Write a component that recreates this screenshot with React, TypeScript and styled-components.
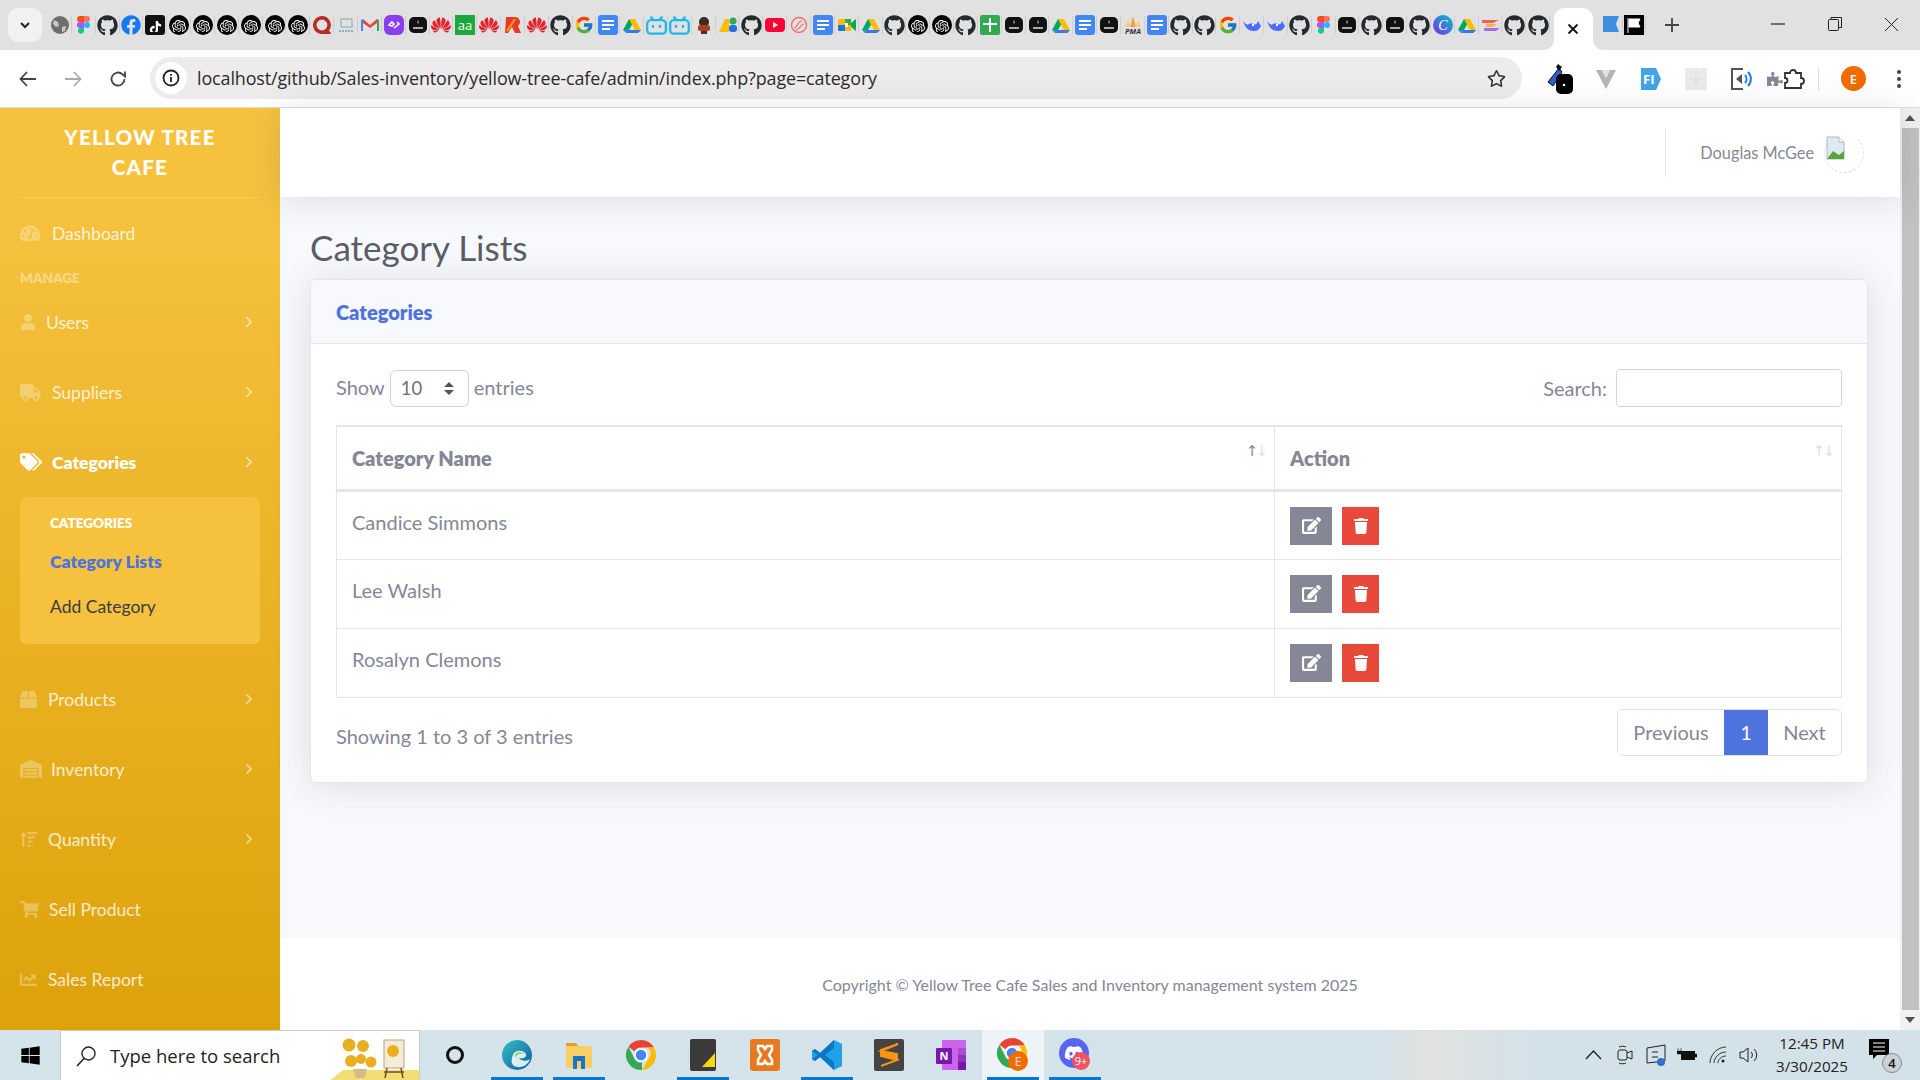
import React from "react";
import styled, { createGlobalStyle } from "styled-components";
import {
  FaTachometerAlt, FaUser, FaTruck, FaTags, FaBox, FaWarehouse, FaSortAmountUp,
  FaShoppingCart, FaChartLine, FaChevronRight, FaEdit, FaTrash, FaGithub, FaFacebook,
  FaWindows, FaDiscord, FaStar, FaRegStar, FaPuzzlePiece,
} from "react-icons/fa";
import { FcGoogle } from "react-icons/fc";
import { SiOpenai, SiHuawei, SiBilibili, SiTiktok, SiQuora } from "react-icons/si";

const GlobalStyle = createGlobalStyle`
  html, body { margin: 0; padding: 0; width: 1920px; height: 1080px; overflow: hidden; background: #fff; }
  * { box-sizing: border-box; }
  body { font-family: "Lato", "Open Sans", sans-serif; color: #858796; }
`;

const Screen = styled.div`width:1920px;height:1080px;display:flex;flex-direction:column;overflow:hidden;`;

/* ---------- browser chrome ---------- */
const TabStrip = styled.div`height:50px;background:#e1e1e1;display:flex;align-items:flex-start;position:relative;flex:none;`;
const TabSearch = styled.div`width:34px;height:34px;margin:8px 6px 0 8px;border-radius:10px;background:#f1f1f1;display:flex;align-items:center;justify-content:center;flex:none;`;
const FavCell = styled.div`width:23.85px;height:34px;margin-top:8px;flex:none;display:flex;align-items:center;justify-content:center;position:relative;
  &::after{content:"";position:absolute;right:0;top:8px;height:18px;width:1px;background:#cfcfcf;}`;
const ActiveTab = styled.div`width:39px;height:42px;margin:8px 3px 0 3.5px;background:#fff;border-radius:10px 10px 0 0;flex:none;display:flex;align-items:center;justify-content:center;position:relative;
  font-family:"DejaVu Sans",sans-serif;color:#111;
  &::before,&::after{content:"";position:absolute;bottom:0;width:10px;height:10px;}
  &::before{left:-10px;background:radial-gradient(circle at 0 0,transparent 9.5px,#fff 10px);}
  &::after{right:-10px;background:radial-gradient(circle at 100% 0,transparent 9.5px,#fff 10px);}`;
const TrailCell = styled(FavCell)`margin-left:${(p: { $ml?: number }) => p.$ml ?? 0}px;`;
const NewTab = styled.div`margin:8px 0 0 14px;height:34px;width:24px;display:flex;align-items:center;justify-content:center;flex:none;`;
const WinControls = styled.div`margin-left:auto;display:flex;height:50px;flex:none;`;
const WinButton = styled.div`width:57px;height:48px;display:flex;align-items:center;justify-content:center;`;

const Toolbar = styled.div`height:58px;background:#fff;border-radius:10px 10px 0 0;margin-top:0;border-bottom:1px solid #dedede;display:flex;align-items:center;flex:none;`;
const NavBtn = styled.div`width:45px;height:40px;display:flex;align-items:center;justify-content:center;flex:none;`;
const NavGroup = styled.div`display:flex;padding-left:5px;width:150px;flex:none;`;
const Omnibox = styled.div`width:1372px;height:42px;margin-top:-1px;border-radius:21px;background:#edebec;display:flex;align-items:center;padding:0 16px 0 5px;flex:none;`;
const InfoChip = styled.div`width:32px;height:32px;border-radius:50%;background:#fff;display:flex;align-items:center;justify-content:center;flex:none;`;
const UrlText = styled.div`margin-left:10px;font-family:"Open Sans",sans-serif;font-size:17.9px;letter-spacing:-0.1px;color:#2b2b2b;flex:1;white-space:nowrap;`;
const ExtGroup = styled.div`display:flex;align-items:center;margin-left:16px;flex:1;height:100%;`;
const ExtBtn = styled.div`width:45px;height:40px;display:flex;align-items:center;justify-content:center;flex:none;position:relative;`;
const ExtSep = styled.div`width:1px;height:24px;background:#ddd;margin:0 12px 0 10px;flex:none;`;
const Avatar = styled.div`width:25px;height:25px;border-radius:50%;background:#f06c00;color:#fff;font:600 13px "Open Sans",sans-serif;display:flex;align-items:center;justify-content:center;flex:none;`;

/* ---------- page ---------- */
const Viewport = styled.div`height:922px;display:flex;flex:none;`;
const Sidebar = styled.nav`width:280px;flex:none;background:linear-gradient(180deg,#f6c23e 10%,#dda20a 100%);display:flex;flex-direction:column;padding:0 20px;`;
const Brand = styled.div`height:90px;flex:none;border-bottom:1px solid rgba(255,255,255,.2);display:flex;align-items:center;justify-content:center;text-align:center;
  color:#fff;font-weight:900;font-size:20.5px;line-height:30px;letter-spacing:1.25px;padding:0 30px 2px;`;
const NavItem = styled.div<{ $active?: boolean; $gap: number }>`height:70px;flex:none;display:flex;align-items:center;font-size:17.5px;
  color:${(p) => (p.$active ? "#fff" : "rgba(255,255,255,.8)")};font-weight:${(p) => (p.$active ? 800 : 400)};
  svg.lead{color:${(p) => (p.$active ? "#fff" : "rgba(255,255,255,.3)")};margin-right:${(p) => p.$gap}px;flex:none;}`;
const Chevron = styled(FaChevronRight)`margin-left:auto;margin-right:5px;color:rgba(255,255,255,.5);font-size:12px;`;
const NavHeading = styled.div`height:19px;flex:none;display:flex;align-items:center;font-size:13.5px;font-weight:800;color:rgba(255,255,255,.4);text-transform:uppercase;`;
const SubMenu = styled.div`height:147px;flex:none;margin-bottom:20px;background:#f6c23e;border-radius:6px;padding:10px 10px 0 30px;display:flex;flex-direction:column;`;
const SubHeading = styled.div`height:32px;flex:none;display:flex;align-items:center;font-size:13.5px;font-weight:800;color:#fff;text-transform:uppercase;`;
const SubLink = styled.div<{ $active?: boolean }>`height:45px;flex:none;display:flex;align-items:center;font-size:17.5px;
  color:${(p) => (p.$active ? "#4e73df" : "#3a3b45")};font-weight:${(p) => (p.$active ? 800 : 400)};`;

const Main = styled.div`flex:1;display:flex;flex-direction:column;background:#f8f9fc;min-width:0;`;
const Topbar = styled.header`height:89px;flex:none;background:#fff;box-shadow:0 3px 35px 0 rgba(58,59,69,.15);display:flex;align-items:center;justify-content:flex-end;padding-right:36px;position:relative;`;
const TopDivider = styled.div`width:1px;height:48px;background:#e3e6f0;margin-right:34px;`;
const UserName = styled.span`font-size:16.3px;color:#858796;margin-right:10px;`;
const UserPic = styled.div`width:40px;height:40px;border-radius:50%;border:1px dashed #e2e2e6;border-top-color:transparent;border-bottom-color:#ddd;position:relative;`;
const Content = styled.main`flex:1;padding:29px 32px 0 30px;`;
const PageTitle = styled.h1`margin:0 0 11px;font-size:35px;line-height:42px;font-weight:400;color:#5a5c69;`;
const Card = styled.section`background:#fff;border:1px solid #e3e6f0;border-radius:6px;box-shadow:0 3px 35px 0 rgba(58,59,69,.15);overflow:hidden;`;
const CardHeader = styled.div`height:64px;background:#f8f9fc;border-bottom:1px solid #e3e6f0;display:flex;align-items:center;padding:0 25px;font-size:20px;font-weight:800;color:#4e73df;`;
const CardBody = styled.div`padding:25px 25px 26px;`;
const FilterRow = styled.div`height:38px;margin-bottom:18px;display:flex;align-items:center;justify-content:space-between;font-size:20px;`;
const ShowGroup = styled.div`display:flex;align-items:center;gap:5px;margin-top:-2px;`;
const SelectBox = styled.div`position:relative;width:79px;height:37px;margin-top:2px;svg{position:absolute;right:15px;top:12px;pointer-events:none;}`;
const EntrySelect = styled.select`width:100%;height:100%;appearance:none;border:1px solid #d1d3e2;border-radius:6px;background:#fff;padding:0 10px;font:18.5px "Lato",sans-serif;color:#6e707e;`;
const SearchGroup = styled.label`display:flex;align-items:center;gap:9px;`;
const SearchInput = styled.input`width:226px;height:38px;border:1px solid #d1d3e2;border-radius:4px;background:#fff;`;
const Table = styled.table`width:100%;table-layout:fixed;border-collapse:collapse;font-size:20px;border:1px solid #e3e6f0;`;
const Th = styled.th`height:64px;border:1px solid #e3e6f0;border-bottom:3px solid #e3e6f0;border-top-width:2px;text-align:left;padding:0 15px;font-weight:800;color:#858796;position:relative;`;
const SortArrows = styled.span`position:absolute;right:9px;top:14px;font:15px/20px "DejaVu Sans",sans-serif;letter-spacing:-3px;`;
const Arrow = styled.span<{ $on?: boolean }>`color:${(p) => (p.$on ? "#858796" : "#dfe1e8")};`;
const Td = styled.td`height:69px;border:1px solid #e3e6f0;padding:15px 15px 0;vertical-align:top;line-height:30px;color:#858796;`;
const Actions = styled.div`display:flex;gap:10px;`;
const ActionBtn = styled.button<{ $w: number; $bg: string }>`width:${(p) => p.$w}px;height:38px;border:none;padding:0;background:${(p) => p.$bg};color:#fff;display:flex;align-items:center;justify-content:center;font-size:19px;`;
const TableFooter = styled.div`display:flex;align-items:flex-start;justify-content:space-between;margin-top:11px;font-size:20px;`;
const Info = styled.div`margin-top:12px;line-height:30px;`;
const Pager = styled.div`display:flex;height:47px;border:1px solid #dddfeb;border-radius:6px;overflow:hidden;width:225px;`;
const PageBtn = styled.div<{ $w: number; $on?: boolean }>`width:${(p) => p.$w}px;display:flex;align-items:center;justify-content:center;
  background:${(p) => (p.$on ? "#4e73df" : "#fff")};color:${(p) => (p.$on ? "#fff" : "#858796")};`;
const Footer = styled.footer`height:92px;flex:none;background:#fff;display:flex;align-items:center;justify-content:center;font-size:16px;color:#858796;padding-top:1px;`;
const Scrollbar = styled.div`width:20px;flex:none;background:#f1f1f1;display:flex;flex-direction:column;align-items:center;`;
const ScrollArrow = styled.div`height:20px;width:20px;display:flex;align-items:center;justify-content:center;flex:none;`;
const ScrollThumb = styled.div`flex:1;width:17px;background:#c1c1c1;margin-left:1px;`;

/* ---------- taskbar ---------- */
const Taskbar = styled.footer`height:50px;flex:none;display:flex;align-items:center;position:relative;
  background:linear-gradient(90deg,#d5e3ea 0%,#d4e2e9 72%,#dfe2e0 74%,#dde2e2 76%,#d3e1e8 80%,#d3e1e8 100%);`;
const StartBtn = styled.div`width:60px;height:50px;display:flex;align-items:center;justify-content:center;flex:none;color:#000;`;
const SearchBox = styled.div`width:360px;height:50px;background:#fff;border:1px solid #ccc;border-bottom:none;display:flex;align-items:center;padding-left:14px;flex:none;position:relative;overflow:hidden;
  font:18.5px "Open Sans",sans-serif;color:#222;svg.glass{margin-right:13px;}`;
const SearchArt = styled.svg`position:absolute;right:0;top:0;`;
const TaskApps = styled.div`display:flex;height:50px;flex:none;margin-left:4px;`;
const TaskApp = styled.div<{ $on?: boolean; $bright?: boolean }>`width:62px;height:50px;display:flex;align-items:center;justify-content:center;position:relative;flex:none;
  background:${(p) => (p.$bright ? "#edf3f6" : "transparent")};
  ${(p) => (p.$on ? "&::after{content:'';position:absolute;left:5px;right:5px;bottom:0;height:3px;background:#0078d4;}" : "")}`;
const Tray = styled.div`margin-left:auto;display:flex;align-items:center;height:50px;flex:none;padding-right:18px;`;
const TrayIcon = styled.div`width:31px;height:50px;display:flex;align-items:center;justify-content:center;flex:none;`;
const Clock = styled.div`width:80px;margin:0 16px 0 8px;text-align:center;font:15.2px/23px "Open Sans",sans-serif;color:#222;flex:none;`;
const Notify = styled.div`width:34px;height:40px;position:relative;flex:none;`;
const NotifyBadge = styled.div`position:absolute;left:14px;top:18px;width:20px;height:20px;border-radius:50%;background:#c9d2d7;border:1px solid #888;color:#111;font:600 13px/18px "Open Sans",sans-serif;text-align:center;`;

/* ---------- favicons ---------- */
const TPS = () => (
  <svg width="20" height="20" viewBox="0 0 20 20"><rect x="1" y="2" width="18" height="16" rx="5" fill="#111" /><path d="M10 5c1 1 1.5 2 0 4c-1-1-1-2 0-4z" fill="#999" /><rect x="5" y="12" width="10" height="2" fill="#aaa" /></svg>
);
const Gpt = () => (
  <svg width="20" height="20" viewBox="0 0 20 20"><circle cx="10" cy="10" r="10" fill="#000" /><foreignObject x="3" y="3" width="14" height="14"><SiOpenai size={14} color="#fff" /></foreignObject></svg>
);
const Docs = () => (
  <svg width="20" height="20" viewBox="0 0 20 20"><rect width="20" height="20" y="0" rx="3" fill="#4285f4" /><path d="M4 5h12v2H4zM4 9h12v2H4zM4 13h8v2H4z" fill="#fff" /></svg>
);
const Drive = () => (
  <svg width="20" height="20" viewBox="0 0 20 20"><path d="M7 2h6l-6 11H1z" fill="#00a85d" transform="translate(0 2)" /><path d="M7 2h6l6 11h-6z" fill="#fbbc04" transform="translate(0 2)" /><path d="M1 15h18l-3 3H4z" fill="#4285f4" /><path d="M7 15h12l-3 3H4z" fill="#3b78e7" /></svg>
);
const Figma = () => (
  <svg width="20" height="20" viewBox="0 0 20 20"><path d="M6 1h4v6H6a3 3 0 0 1 0-6z" fill="#f24e1e" /><path d="M10 1h3a3 3 0 0 1 0 6h-3z" fill="#ff7262" /><path d="M6 7h4v6H6a3 3 0 0 1 0-6z" fill="#a259ff" /><circle cx="13" cy="10" r="3" fill="#1abcfe" /><path d="M6 13h4v3a3 3 0 1 1-4-3z" fill="#0acf83" /></svg>
);
const Gh = () => <FaGithub size={21} color="#24292e" />;
const Hw = () => <SiHuawei size={20} color="#e0242f" />;
const Bili = () => <SiBilibili size={21} color="#20b8ef" />;
const Deep = () => (
  <svg width="20" height="20" viewBox="0 0 20 20"><path d="M1 6c2 7 6 10 11 10c3 0 6-2 7-5l-3-5c-1 3-2 4-4 3C9 8 6 9 6 10C4 9 2 8 1 6z" fill="#4d6bfe" /><circle cx="11" cy="10" r="1.2" fill="#fff" /></svg>
);
const G = () => <FcGoogle size={20} />;

const favs: React.ReactNode[] = [
  <svg key="a" width="20" height="20" viewBox="0 0 20 20"><circle cx="10" cy="10" r="9" fill="#6e6e6e" /><path d="M4 5l4 2l1 4l-3 1l-3-3zM12 12l4-1l-1 5l-3 1z" fill="#c9c9c9" /></svg>,
  <Figma />, <Gh />, <FaFacebook size={20} color="#1877f2" />,
  <svg width="20" height="20" viewBox="0 0 20 20"><rect width="20" height="20" rx="3" fill="#111" /><foreignObject x="4" y="3" width="13" height="14"><SiTiktok size={13} color="#fff" /></foreignObject></svg>,
  <Gpt />, <Gpt />, <Gpt />, <Gpt />, <Gpt />, <Gpt />,
  <SiQuora size={18} color="#b92b27" />,
  <svg width="20" height="20" viewBox="0 0 20 20"><rect x="5" y="4" width="11" height="8" fill="none" stroke="#8aa" /><path d="M3 16h14" stroke="#8ac" strokeDasharray="2 1" strokeWidth="2" /></svg>,
  <svg width="20" height="20" viewBox="0 0 20 20"><path d="M1 5l2-1v12H1z" fill="#4285f4" /><path d="M19 5l-2-1v12h2z" fill="#34a853" /><path d="M3 4l7 6l7-6v4l-7 5l-7-5z" fill="#ea4335" /></svg>,
  <svg width="20" height="20" viewBox="0 0 20 20"><rect width="20" height="20" rx="6" fill="#8b3df0" /><path d="M5 10l3-3l2 2l-2 2zM10 13l5-4l-2-2" stroke="#fff" fill="none" strokeWidth="1.6" /></svg>,
  <TPS />, <Hw />,
  <svg width="20" height="20" viewBox="0 0 20 20"><rect width="20" height="20" fill="#1ea83c" /><text x="10" y="14.5" fontSize="13" fill="#fff" textAnchor="middle" fontFamily="Open Sans">aa</text></svg>,
  <Hw />,
  <svg width="20" height="20" viewBox="0 0 20 20"><path d="M3 2h9a5 5 0 0 1 3 9l3 7h-6l-3-6l-4 6H2z" fill="#e63a2e" /><path d="M4 16L12 4" stroke="#f6a800" strokeWidth="2" /></svg>,
  <Hw />, <Gh />, <G />, <Docs />, <Drive />,
  <Bili />, <Bili />,
  <svg width="20" height="20" viewBox="0 0 20 20"><circle cx="10" cy="7" r="5" fill="#3a2a20" /><rect x="4" y="10" width="12" height="6" rx="2" fill="#a8401e" /><path d="M7 16h6v3H7z" fill="#523" /></svg>,
  <svg width="20" height="20" viewBox="0 0 20 20"><path d="M1 17L7 4h4v13z" fill="#fbbc04" /><circle cx="15" cy="6" r="3.5" fill="#34a853" /><rect x="11" y="10" width="8" height="7" rx="3" fill="#1a73e8" /></svg>,
  <Gh />,
  <svg width="20" height="20" viewBox="0 0 20 20"><rect x="0" y="3" width="20" height="14" rx="4" fill="#ff0033" /><path d="M8 7l5 3l-5 3z" fill="#fff" /></svg>,
  <svg width="20" height="20" viewBox="0 0 20 20"><circle cx="10" cy="10" r="7.5" fill="none" stroke="#f26d6d" strokeWidth="1.4" /><path d="M5 13c4 0 3-7 8-7M7 15c4 0 4-6 8-6" fill="none" stroke="#f26d6d" strokeWidth="1.2" /></svg>,
  <Docs />,
  <svg width="20" height="20" viewBox="0 0 20 20"><rect x="1" y="4" width="13" height="12" rx="1.5" fill="#fbbc04" /><path d="M1 10h7v6H2.5A1.5 1.5 0 0 1 1 14.5z" fill="#1a73e8" /><path d="M8 4h6v6H8z" fill="#34a853" /><path d="M8 8h3v4H8z" fill="#fff" /><path d="M14 8l5-4v12l-5-4z" fill="#00ac47" /></svg>,
  <Drive />, <Gh />, <Gpt />, <Gpt />, <Gh />,
  <svg width="20" height="20" viewBox="0 0 20 20"><rect width="20" height="20" rx="2" fill="#34a853" /><path d="M9 3h2v5h6v2h-6v7H9v-7H3V8h6z" fill="#fff" /></svg>,
  <TPS />, <TPS />, <Drive />, <Docs />, <TPS />,
  <svg width="20" height="20" viewBox="0 0 20 20"><path d="M10 1l3 11H7z" fill="#f0a040" /><path d="M5 5l3 7H2zM15 5l3 7h-6z" fill="#f7c98a" /><text x="10" y="19" fontSize="7.5" fontStyle="italic" fontWeight="700" fill="#334" textAnchor="middle" fontFamily="Open Sans">PMA</text></svg>,
  <Docs />, <Gh />, <Gh />, <G />, <Deep />, <Deep />, <Gh />, <Figma />, <TPS />, <Gh />, <TPS />, <Gh />,
  <svg width="20" height="20" viewBox="0 0 20 20"><defs><linearGradient id="cv" x1="0" y1="1" x2="1" y2="0"><stop offset="0" stopColor="#7d2ae8" /><stop offset="1" stopColor="#00c4cc" /></linearGradient></defs><circle cx="10" cy="10" r="10" fill="url(#cv)" /><text x="10" y="15" fontSize="14" fontStyle="italic" fill="#fff" textAnchor="middle" fontFamily="Liberation Serif">C</text></svg>,
  <Drive />,
  <svg width="20" height="20" viewBox="0 0 20 20"><path d="M1 5h17l-6 3H1z" fill="#ff5a5f" /><path d="M5 9h11l-5 3H5z" fill="#f7b733" /><path d="M3 13h16l-4 3H3z" fill="#a36bf2" /></svg>,
  <Gh />, <Gh />,
];

const ChromeLogo = ({ size = 32 }: { size?: number }) => (
  <svg width={size} height={size} viewBox="0 0 32 32">
    <path d="M16 1a15 15 0 0 1 13 7.5H16a7.5 7.5 0 0 0-6.5 3.8L3.500 7.800A15 15 0 0 1 16 1z" fill="#ea4335" />
    <path d="M29 8.500A15 15 0 0 1 17 31l6.500-11.300A7.500 7.500 0 0 0 22.500 8.500z" fill="#fbbc04" />
    <path d="M3.500 7.800L9.500 19.700A7.500 7.500 0 0 0 17 23.500L17 31A15 15 0 0 1 3.500 7.800z" fill="#34a853" />
    <circle cx="16" cy="16" r="6" fill="#4285f4" stroke="#fff" strokeWidth="1.500" />
  </svg>
);

const navGlyph = { className: "lead" };

export default function App() {
  return (
    <Screen>
      <GlobalStyle />
      <TabStrip>
        <TabSearch>
          <svg width="14" height="14" viewBox="0 0 14 14"><path d="M3 5l4 4l4-4" fill="none" stroke="#222" strokeWidth="2" /></svg>
        </TabSearch>
        {favs.map((f, i) => <FavCell key={i}>{f}</FavCell>)}
        <ActiveTab>
          <svg width="12" height="12" viewBox="0 0 12 12"><path d="M1.500 1.500l9 9M10.500 1.500l-9 9" stroke="#111" strokeWidth="1.800" /></svg>
        </ActiveTab>
        <TrailCell $ml={3}>
          <svg width="18" height="20" viewBox="0 0 18 20"><path d="M1 1h16l-3 8l3 8H1z" fill="#3f8fe0" /></svg>
        </TrailCell>
        <FavCell>
          <svg width="20" height="20" viewBox="0 0 20 20"><rect width="20" height="20" fill="#000" /><path d="M4 3v15M5 4h11l-2 4l2 4H5z" stroke="#fff" fill="#fff" /></svg>
        </FavCell>
        <NewTab>
          <svg width="14" height="14" viewBox="0 0 14 14"><path d="M7 0v14M0 7h14" stroke="#444" strokeWidth="1.800" /></svg>
        </NewTab>
        <WinControls>
          <WinButton><svg width="14" height="14" viewBox="0 0 14 14"><path d="M0 7h14" stroke="#222" strokeWidth="1.200" /></svg></WinButton>
          <WinButton><svg width="14" height="14" viewBox="0 0 14 14"><rect x=".5" y="2.500" width="10" height="11" rx="1" fill="none" stroke="#222" /><path d="M3 2.500V.5h10.500v10h-3" fill="none" stroke="#222" /></svg></WinButton>
          <WinButton><svg width="15" height="15" viewBox="0 0 15 15"><path d="M1 1l13 13M14 1L1 14" stroke="#222" strokeWidth="1" /></svg></WinButton>
        </WinControls>
      </TabStrip>

      <Toolbar>
        <NavGroup>
          <NavBtn><svg width="18" height="18" viewBox="0 0 18 18"><path d="M17 9H2M8 2L1.500 9L8 16" fill="none" stroke="#444" strokeWidth="1.800" /></svg></NavBtn>
          <NavBtn><svg width="18" height="18" viewBox="0 0 18 18"><path d="M1 9h15M10 2l6.500 7l-6.500 7" fill="none" stroke="#aaa" strokeWidth="1.800" /></svg></NavBtn>
          <NavBtn><svg width="18" height="18" viewBox="0 0 18 18"><path d="M15.500 9a6.500 6.500 0 1 1-2-4.700L16 6.500V1.500" fill="none" stroke="#444" strokeWidth="1.800" /></svg></NavBtn>
        </NavGroup>
        <Omnibox>
          <InfoChip>
            <svg width="18" height="18" viewBox="0 0 18 18"><circle cx="9" cy="9" r="7.500" fill="none" stroke="#222" strokeWidth="1.800" /><path d="M9 8v5M9 5v1.800" stroke="#222" strokeWidth="1.800" /></svg>
          </InfoChip>
          <UrlText>localhost/github/Sales-inventory/yellow-tree-cafe/admin/index.php?page=category</UrlText>
          <FaRegStar size={19} color="#333" />
        </Omnibox>
        <ExtGroup>
          <ExtBtn>
            <svg width="28" height="34" viewBox="0 0 28 34"><path d="M1 20l11-14l3 4l-9 14z" fill="#2d5fd0" stroke="#111" /><path d="M11 2l4 3l-3 4l-3-4z" fill="#111" /><rect x="9" y="12" width="17" height="20" rx="5" fill="#000" /><circle cx="17" cy="23" r="1.300" fill="#fff" /></svg>
          </ExtBtn>
          <ExtBtn><svg width="22" height="20" viewBox="0 0 22 20"><path d="M1 1h6l4 8l4-8h6L11 20z" fill="#b4b4b4" /><path d="M7 1h8l-4 8z" fill="#e1e1e1" /></svg></ExtBtn>
          <ExtBtn><svg width="22" height="24" viewBox="0 0 22 24"><path d="M1 1h15l5 11l-5 11H1z" fill="#42a5e8" /><text x="3" y="17" fontSize="13" fontWeight="700" fill="#fff" fontFamily="Open Sans">FI</text></svg></ExtBtn>
          <ExtBtn><svg width="22" height="22" viewBox="0 0 22 22"><rect width="22" height="22" fill="#ececec" /><path d="M2 2l18 18M20 2L2 20M11 2v18M2 11h18" stroke="#ddd" /></svg></ExtBtn>
          <ExtBtn><svg width="22" height="24" viewBox="0 0 22 24"><path d="M13 2H2v20h11" fill="none" stroke="#555" strokeWidth="2" /><path d="M6 12l6-5v10z" fill="#555" /><path d="M15 8a6 6 0 0 1 0 8M18 5a10 10 0 0 1 0 14" fill="none" stroke="#1a7fe0" strokeWidth="2" /></svg></ExtBtn>
          <ExtBtn><FaPuzzlePiece size={0} /><svg width="22" height="22" viewBox="0 0 22 22"><path d="M2 5h5a3 3 0 0 1 6 0h5v5a3 3 0 0 1 0 6v4H2v-5a2.500 2.500 0 0 0 0-5z" fill="none" stroke="#333" strokeWidth="1.800" /></svg></ExtBtn>
          <ExtSep />
          <ExtBtn><Avatar>E</Avatar></ExtBtn>
          <ExtBtn><svg width="6" height="20" viewBox="0 0 6 20"><circle cx="3" cy="3" r="2" fill="#444" /><circle cx="3" cy="10" r="2" fill="#444" /><circle cx="3" cy="17" r="2" fill="#444" /></svg></ExtBtn>
        </ExtGroup>
      </Toolbar>

      <Viewport>
        <Sidebar>
          <Brand>YELLOW TREE CAFE</Brand>
          <NavItem $gap={12}><FaTachometerAlt {...navGlyph} size={20} />Dashboard</NavItem>
          <NavHeading>Manage</NavHeading>
          <NavItem $gap={10}><FaUser {...navGlyph} size={16} />Users<Chevron /></NavItem>
          <NavItem $gap={11}><FaTruck {...navGlyph} size={21} />Suppliers<Chevron /></NavItem>
          <NavItem $active $gap={10}><FaTags {...navGlyph} size={22} />Categories<Chevron /></NavItem>
          <SubMenu>
            <SubHeading>Categories</SubHeading>
            <SubLink $active>Category Lists</SubLink>
            <SubLink>Add Category</SubLink>
          </SubMenu>
          <NavItem $gap={11}><FaBox {...navGlyph} size={17} />Products<Chevron /></NavItem>
          <NavItem $gap={9}><FaWarehouse {...navGlyph} size={22} />Inventory<Chevron /></NavItem>
          <NavItem $gap={11}><FaSortAmountUp {...navGlyph} size={17} />Quantity<Chevron /></NavItem>
          <NavItem $gap={10}><FaShoppingCart {...navGlyph} size={19} />Sell Product</NavItem>
          <NavItem $gap={11}><FaChartLine {...navGlyph} size={17} />Sales Report</NavItem>
        </Sidebar>

        <Main>
          <Topbar>
            <TopDivider />
            <UserName>Douglas McGee</UserName>
            <UserPic>
              <svg width="20" height="24" viewBox="0 0 20 24" style={{ position: "absolute", left: 1, top: 2 }}>
                <path d="M1 1h12l5 5v17H1z" fill="#dfe8f6" stroke="#b5b5b5" />
                <path d="M1 23l6-8l6 4l5-4v8z" fill="#5aa53a" />
                <path d="M13 1v5h5" fill="#fff" stroke="#b5b5b5" />
              </svg>
            </UserPic>
          </Topbar>
          <Content>
            <PageTitle>Category Lists</PageTitle>
            <Card>
              <CardHeader>Categories</CardHeader>
              <CardBody>
                <FilterRow>
                  <ShowGroup>
                    Show
                    <SelectBox>
                      <EntrySelect defaultValue="10"><option>10</option><option>25</option><option>50</option></EntrySelect>
                      <svg width="10" height="13" viewBox="0 0 10 13"><path d="M5 0l5 5H0zM5 13l5-5H0z" fill="#555" /></svg>
                    </SelectBox>
                    entries
                  </ShowGroup>
                  <SearchGroup>Search:<SearchInput /></SearchGroup>
                </FilterRow>
                <Table>
                  <colgroup><col width="938" /><col /></colgroup>
                  <thead>
                    <tr>
                      <Th>Category Name<SortArrows><Arrow $on>↑</Arrow><Arrow>↓</Arrow></SortArrows></Th>
                      <Th>Action<SortArrows><Arrow>↑</Arrow><Arrow>↓</Arrow></SortArrows></Th>
                    </tr>
                  </thead>
                  <tbody>
                    {["Candice Simmons", "Lee Walsh", "Rosalyn Clemons"].map((n) => (
                      <tr key={n}>
                        <Td>{n}</Td>
                        <Td>
                          <Actions>
                            <ActionBtn $w={42} $bg="#858796"><FaEdit /></ActionBtn>
                            <ActionBtn $w={37} $bg="#e74a3b"><FaTrash size={16} /></ActionBtn>
                          </Actions>
                        </Td>
                      </tr>
                    ))}
                  </tbody>
                </Table>
                <TableFooter>
                  <Info>Showing 1 to 3 of 3 entries</Info>
                  <Pager>
                    <PageBtn $w={106}>Previous</PageBtn>
                    <PageBtn $w={44} $on>1</PageBtn>
                    <PageBtn $w={73}>Next</PageBtn>
                  </Pager>
                </TableFooter>
              </CardBody>
            </Card>
          </Content>
          <Footer>Copyright © Yellow Tree Cafe Sales and Inventory management system 2025</Footer>
        </Main>

        <Scrollbar>
          <ScrollArrow><svg width="10" height="6" viewBox="0 0 10 6"><path d="M5 0l5 6H0z" fill="#505050" /></svg></ScrollArrow>
          <ScrollThumb />
          <ScrollArrow><svg width="10" height="6" viewBox="0 0 10 6"><path d="M5 6l5-6H0z" fill="#505050" /></svg></ScrollArrow>
        </Scrollbar>
      </Viewport>

      <Taskbar>
        <StartBtn><FaWindows size={21} /></StartBtn>
        <SearchBox>
          <svg className="glass" width="22" height="22" viewBox="0 0 22 22"><circle cx="13.500" cy="8.500" r="6.500" fill="none" stroke="#222" strokeWidth="1.400" /><path d="M9 13.500L2 21" stroke="#222" strokeWidth="1.600" /></svg>
          Type here to search
          <SearchArt width="90" height="50" viewBox="0 0 90 50">
            <path d="M0 50l14-11h76v11z" fill="#f3dd75" />
            <g fill="#e8b020"><circle cx="20" cy="14" r="6.500" /><circle cx="34" cy="15" r="6" /><circle cx="22" cy="30" r="6" /><circle cx="42" cy="31" r="5.500" /><circle cx="32" cy="28" r="5" /></g>
            <path d="M24 38h14l-2 9H27z" fill="#d9b98a" />
            <rect x="55" y="9" width="20" height="28" fill="#f4ecd9" stroke="#b9a17f" />
            <circle cx="64" cy="20" r="6" fill="#e8b020" />
            <path d="M58 37l-2 10M72 37l2 10M55 41h20" stroke="#7a4a22" strokeWidth="1.500" />
          </SearchArt>
        </SearchBox>
        <TaskApps>
          <TaskApp>
            <svg width="20" height="20" viewBox="0 0 20 20"><circle cx="10" cy="10" r="7.500" fill="none" stroke="#111" strokeWidth="3" /></svg>
          </TaskApp>
          <TaskApp $on>
            <svg width="32" height="32" viewBox="0 0 32 32"><defs><linearGradient id="ed" x1="0" y1="0" x2="1" y2="1"><stop offset="0" stopColor="#35c1c1" /><stop offset="1" stopColor="#0c59a4" /></linearGradient></defs><circle cx="16" cy="16" r="15" fill="url(#ed)" /><path d="M12 16c1-5 10-6 13-1c1 4-4 5-7 4c2 3 7 4 11 1c-2 7-10 10-16 7c-3-2-3-7-1-11z" fill="#fff" opacity=".85" /><path d="M14 15c3-3 8-2 9 0c-3-1-7 0-9 4z" fill="#8adf6a" /></svg>
          </TaskApp>
          <TaskApp $on>
            <svg width="30" height="30" viewBox="0 0 30 30"><path d="M2 3h10l2 3h14v22H2z" fill="#f8cf63" /><path d="M2 3h10l2 3H2z" fill="#e0a030" /><path d="M9 29V16h12v13h-4v-8h-4v8z" fill="#1a74c9" /></svg>
          </TaskApp>
          <TaskApp><ChromeLogo size={32} /></TaskApp>
          <TaskApp $on>
            <svg width="26" height="32" viewBox="0 0 26 32"><rect width="26" height="32" rx="2" fill="#3a3a3a" /><path d="M12 28L25 14v14z" fill="#f5d90a" /></svg>
          </TaskApp>
          <TaskApp>
            <svg width="30" height="32" viewBox="0 0 30 32"><rect width="30" height="32" rx="3" fill="#e8791f" /><path d="M8 7h5l2 3l2-3h5v4l-3 5l3 5v4h-5l-2-3l-2 3H8v-4l3-5l-3-5z" fill="none" stroke="#fff" strokeWidth="2.500" /></svg>
          </TaskApp>
          <TaskApp $on>
            <svg width="30" height="32" viewBox="0 0 30 32"><path d="M22 1l8 4v22l-8 4L8 18l-5 4l-3-2V12l3-2l5 4z" fill="#1fa2e8" /><path d="M22 1L8 14l-5-4l-3 2l6 4l-6 4l3 2l5-4l14 13V23l-9-7l9-7z" fill="#0a78c2" /></svg>
          </TaskApp>
          <TaskApp>
            <svg width="30" height="32" viewBox="0 0 30 32"><rect width="30" height="32" rx="2" fill="#444" /><path d="M24 5L7 11v6l16 4v0l-16 6l16-6v-6L7 12z" fill="#f89512" stroke="#f89512" strokeWidth="2" /></svg>
          </TaskApp>
          <TaskApp>
            <svg width="30" height="32" viewBox="0 0 30 32"><rect x="6" y="1" width="24" height="30" rx="1" fill="#ca64ea" /><rect x="22" y="9" width="8" height="7" fill="#ae4bd5" /><rect x="22" y="16" width="8" height="7" fill="#9332bf" /><rect x="22" y="23" width="8" height="8" fill="#7719aa" /><rect y="9" width="16" height="16" rx="1" fill="#7719aa" /><text x="8" y="21" fontSize="11" fontWeight="700" fill="#fff" textAnchor="middle" fontFamily="Open Sans">N</text></svg>
          </TaskApp>
          <TaskApp $on $bright>
            <svg width="34" height="36" viewBox="0 0 34 36"><foreignObject width="32" height="32"><ChromeLogo size={32} /></foreignObject><circle cx="22" cy="24" r="10" fill="#f06c00" /><text x="22" y="28.500" fontSize="12" fill="#fde" textAnchor="middle" fontFamily="Open Sans">E</text></svg>
          </TaskApp>
          <TaskApp $on>
            <svg width="32" height="34" viewBox="0 0 32 34"><circle cx="15" cy="15" r="15" fill="#5865f2" /><foreignObject x="5" y="5" width="20" height="20"><FaDiscord size={20} color="#fff" /></foreignObject><circle cx="22" cy="23" r="9" fill="#ed5565" /><text x="22" y="27" fontSize="11" fill="#fff" textAnchor="middle" fontFamily="Open Sans">9+</text></svg>
          </TaskApp>
        </TaskApps>
        <Tray>
          <TrayIcon><svg width="17" height="10" viewBox="0 0 17 10"><path d="M1 9l7.500-8L16 9" fill="none" stroke="#222" strokeWidth="1.300" /></svg></TrayIcon>
          <TrayIcon><svg width="16" height="20" viewBox="0 0 16 20"><rect x="1" y="5" width="9" height="10" rx="2" fill="none" stroke="#222" /><path d="M10 8l5-2v8l-5-2M2 2c2-1 5-1 7 0M2 18c2 1 5 1 7 0" fill="none" stroke="#222" /></svg></TrayIcon>
          <TrayIcon><svg width="22" height="22" viewBox="0 0 22 22"><path d="M2 4l18-3v16l-18 2z" fill="none" stroke="#222" /><path d="M7 8h6M7 13h6" stroke="#222" /><circle cx="16" cy="18" r="4" fill="#2e72c8" /></svg></TrayIcon>
          <TrayIcon><svg width="20" height="14" viewBox="0 0 20 14"><rect x="4" y="3" width="14" height="9" fill="#111" /><path d="M18 6h2v3h-2M1 0v3M4 0v3M0 3h5v3H0z" fill="#111" stroke="#111" strokeWidth=".5" /></svg></TrayIcon>
          <TrayIcon><svg width="18" height="18" viewBox="0 0 18 18"><path d="M1 17C1 9 8 1 17 1M5 17c0-5 5-11 12-11M9 17c0-3 3-7 8-7" fill="none" stroke="#333" /><circle cx="14" cy="15" r="1.500" fill="#222" /></svg></TrayIcon>
          <TrayIcon><svg width="20" height="18" viewBox="0 0 20 18"><path d="M1 6h3l5-4v14l-5-4H1z" fill="none" stroke="#222" /><path d="M12 6a4 4 0 0 1 0 6M15 3a8 8 0 0 1 0 12" fill="none" stroke="#222" /></svg></TrayIcon>
          <Clock>12:45 PM<br />3/30/2025</Clock>
          <Notify>
            <svg width="22" height="22" viewBox="0 0 22 22" style={{ position: "absolute", left: 0, top: 4 }}><path d="M1 0h20v16H9l-4 4v-4H1z" fill="#000" /><path d="M5 4h12M5 8h12M5 12h12" stroke="#fff" strokeWidth="1.200" /></svg>
            <NotifyBadge>4</NotifyBadge>
          </Notify>
        </Tray>
      </Taskbar>
    </Screen>
  );
}
